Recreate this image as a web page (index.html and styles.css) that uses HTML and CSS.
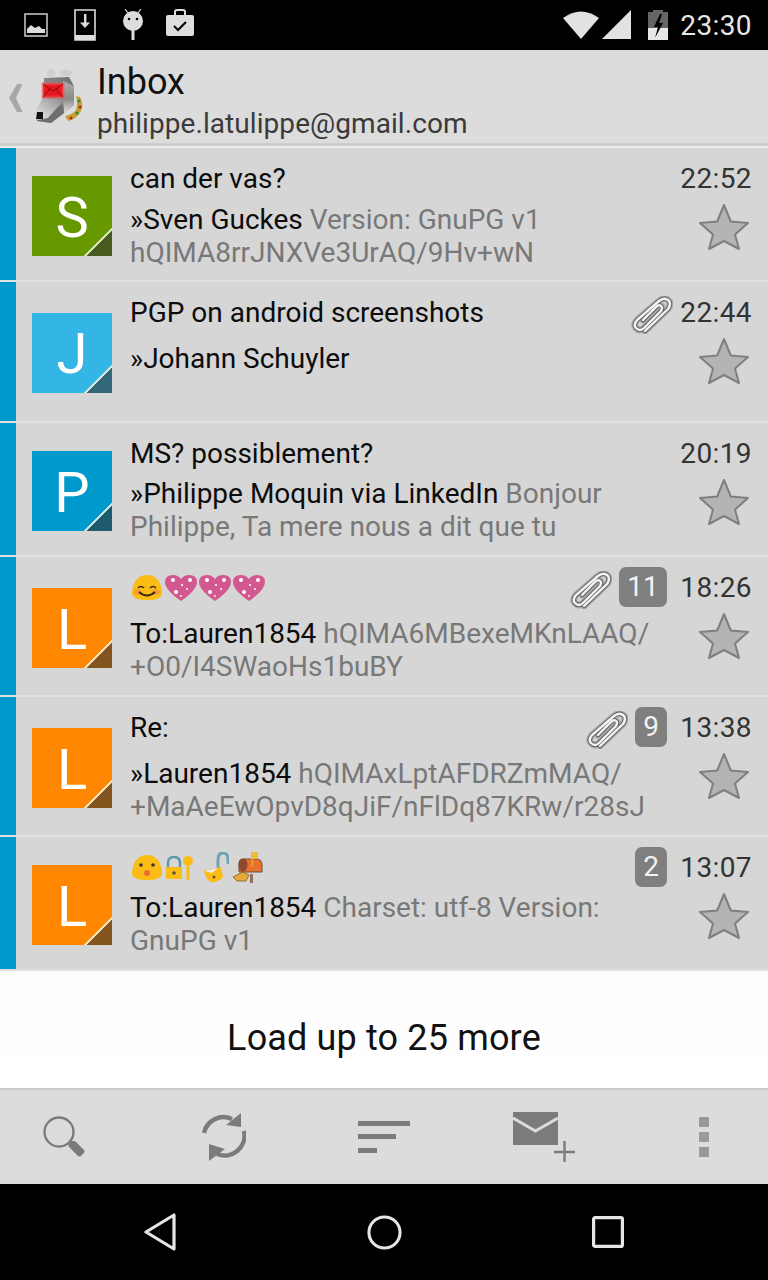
FILE: index.html
```html
<!DOCTYPE html>
<html lang="en">
<head>
<meta charset="utf-8">
<title>Inbox</title>
<link rel="stylesheet" href="styles.css">
</head>
<body>
<div class="screen">
  <div class="status">
    <div class="status-left">
      <svg width="24" height="24" viewBox="0 0 24 24"><rect x="1" y="1" width="22" height="22" fill="none" stroke="#ddd" stroke-width="1.4"/><path d="M3 20v-4l4-4 4 3 4-2 3 3 3 0v4z" fill="#ddd"/></svg>
      <svg width="22" height="32" viewBox="0 0 22 32"><path d="M1 1h20v30H1z" fill="none" stroke="#ddd" stroke-width="1.6"/><rect x="1" y="26" width="20" height="5" fill="#ddd"/><path d="M10 5h2.4v8.5h3.6L11 19l-5-5.500h4z" fill="#ddd"/></svg>
      <svg class="android" width="22" height="32" viewBox="0 0 22 32"><path d="M3 0l3 4M19 0l-3 4" stroke="#ddd" stroke-width="1.2"/><circle cx="11" cy="12" r="10" fill="#ddd"/><circle cx="7" cy="10" r="1.300" fill="#000"/><circle cx="15" cy="10" r="1.300" fill="#000"/><rect x="9.500" y="21" width="3" height="10" fill="#ddd"/></svg>
      <svg class="bag" width="28" height="28" viewBox="0 0 28 28"><path d="M9 6V3q0-2 2-2h6q2 0 2 2v3" fill="none" stroke="#ddd" stroke-width="2"/><rect x="0" y="6" width="28" height="21" rx="2" fill="#ddd"/><path d="M8 17l4 4 8-8" fill="none" stroke="#000" stroke-width="2"/></svg>
    </div>
    <div class="status-right">
      <svg width="36" height="28" viewBox="0 0 36 28"><path d="M0 7Q18-6 36 7L18 28z" fill="#e2e2e2"/></svg>
      <svg width="30" height="30" viewBox="0 0 30 30"><path d="M0 29L29 0v29z" fill="#e2e2e2"/></svg>
      <svg width="20" height="30" viewBox="0 0 20 30"><path d="M5 2V0h10v2h5v16H0V2z" fill="#666"/><rect y="18" width="20" height="12" fill="#e8e8e8"/><path d="M12 4l-6 13h4l-3 11 8-15h-4l3-9z" fill="#000"/></svg>
      <span class="clock">23:30</span>
    </div>
  </div>

  <header class="appbar">
    <svg class="chevron" width="14" height="28" viewBox="0 0 14 28"><path d="M13.500 0H8L0 14l8 14h5.500L7 14z" fill="#a8a8a8"/></svg>
    <svg class="logo" width="52" height="58" viewBox="32 68 52 58">
      <defs>
        <linearGradient id="headFill" x1="1" y1="0" x2="0" y2="1"><stop offset="0" stop-color="#6f6f6f"/><stop offset=".5" stop-color="#8e8e8e"/><stop offset="1" stop-color="#b8b8b8"/></linearGradient>
        <linearGradient id="sideFill" x1="0" y1="0" x2="0" y2="1"><stop offset="0" stop-color="#b0b0b0"/><stop offset=".55" stop-color="#8a8a8a"/><stop offset="1" stop-color="#e0e0e0"/></linearGradient>
        <linearGradient id="muzzleFill" x1="1" y1="0" x2="0" y2="1"><stop offset="0" stop-color="#8c8c8c"/><stop offset="1" stop-color="#f0f0f0"/></linearGradient>
      </defs>
      <ellipse cx="50" cy="74" rx="4.500" ry="4" fill="#cfcfcf"/><ellipse cx="65" cy="74" rx="6.500" ry="3.500" fill="#cfcfcf"/>
      <path d="M75 97l4 1q4 8 1 14-4 8-13 10l-3-5q7-1 11-6 2-6 0-14z" fill="#c8a032"/>
      <circle cx="78" cy="102" r="1.600" fill="#2e8b3a"/><circle cx="79" cy="108" r="1.600" fill="#b3262a"/><circle cx="76" cy="114" r="1.600" fill="#2e8b3a"/><circle cx="70" cy="119" r="1.600" fill="#b3262a"/>
      <path d="M43 79l25-1 5 9v19l-10 8-13 10-14-2-3-7 6-9 3-8z" fill="url(#headFill)"/>
      <path d="M62 82l11 5v19l-10 8-1-14z" fill="url(#sideFill)"/>
      <path d="M42 99l20 1-5 8-10 11-9 3-5-5 2-7z" fill="url(#muzzleFill)"/>
      <path d="M47 119l10-11 5-3 1 9-13 10-14-2 0-1z" fill="#6e6e6e"/>
      <path d="M36 113h6v7h-7z" fill="#111"/>
      <rect x="42" y="85" width="20" height="13" fill="#e8161e" stroke="#f44" stroke-opacity=".55" stroke-width="3"/>
      <path d="M42 85l10 7 10-7M42 98l7-8M62 98l-7-8" fill="none" stroke="#6a0a0a" stroke-width=".8"/>
    </svg>
    <div class="appbar-text">
      <div class="appbar-title">Inbox</div>
      <div class="appbar-sub">philippe.latulippe@gmail.com</div>
    </div>
  </header>

  <main class="list">
    <article class="row h134">
      <div class="stripe"></div>
      <div class="avatar green"><span>S</span><i class="fold"></i></div>
      <div class="body">
        <div class="subject">can der vas?</div>
        <p class="preview"><b>»Sven Guckes</b> Version: GnuPG v1 hQIMA8rrJNXVe3UrAQ/9Hv+wN</p>
      </div>
      <div class="side"><span class="time">22:52</span><svg class="star" width="52" height="48" viewBox="0 0 52 48"><use href="#star"/></svg></div>
    </article>

    <article class="row h141 clipped">
      <div class="stripe"></div>
      <div class="avatar sky"><span>J</span><i class="fold"></i></div>
      <div class="body">
        <div class="subject">PGP on android screenshots
          <span class="meta solo"><svg class="clip" width="42" height="38" viewBox="0 0 42 38"><use href="#clip"/></svg></span></div>
        <p class="preview"><b>»Johann Schuyler</b></p>
      </div>
      <div class="side"><span class="time">22:44</span><svg class="star" width="52" height="48" viewBox="0 0 52 48"><use href="#star"/></svg></div>
    </article>

    <article class="row h134 tight">
      <div class="stripe"></div>
      <div class="avatar blue"><span>P</span><i class="fold"></i></div>
      <div class="body">
        <div class="subject">MS? possiblement?</div>
        <p class="preview"><b>»Philippe Moquin via LinkedIn</b> Bonjour Philippe, Ta mere nous a dit que tu</p>
      </div>
      <div class="side"><span class="time">20:19</span><svg class="star" width="52" height="48" viewBox="0 0 52 48"><use href="#star"/></svg></div>
    </article>

    <article class="row h140 clipped">
      <div class="stripe"></div>
      <div class="avatar orange"><span>L</span><i class="fold"></i></div>
      <div class="body">
        <div class="subject">
          <span class="emoji-run">
            <svg width="34" height="28" viewBox="0 0 34 28"><use href="#blob"/><ellipse cx="8" cy="18" rx="4" ry="2.500" fill="#f59a3c"/><ellipse cx="26" cy="18" rx="4" ry="2.500" fill="#f59a3c"/><path d="M8 14q3-3 6 0M20 14q3-3 6 0" fill="none" stroke="#3a2a10" stroke-width="1.600"/><path d="M9 18q8 7 16 0" fill="none" stroke="#3a2a10" stroke-width="1.800"/></svg>
            <svg width="34" height="28" viewBox="0 0 34 28"><use href="#heart"/></svg>
            <svg width="34" height="28" viewBox="0 0 34 28"><use href="#heart"/></svg>
            <svg width="34" height="28" viewBox="0 0 34 28"><use href="#heart"/></svg>
          </span>
          <span class="meta"><svg class="clip" width="42" height="38" viewBox="0 0 42 38"><use href="#clip"/></svg><span class="count count-wide">11</span></span>
        </div>
        <p class="preview"><b>To:Lauren1854</b> hQIMA6MBexeMKnLAAQ/ +O0/I4SWaoHs1buBY</p>
      </div>
      <div class="side"><span class="time">18:26</span><svg class="star" width="52" height="48" viewBox="0 0 52 48"><use href="#star"/></svg></div>
    </article>

    <article class="row h140 clipped">
      <div class="stripe"></div>
      <div class="avatar orange"><span>L</span><i class="fold"></i></div>
      <div class="body">
        <div class="subject">Re:
          <span class="meta"><svg class="clip" width="42" height="38" viewBox="0 0 42 38"><use href="#clip"/></svg><span class="count">9</span></span>
        </div>
        <p class="preview"><b>»Lauren1854</b> hQIMAxLptAFDRZmMAQ/ +MaAeEwOpvD8qJiF/nFlDq87KRw/r28sJ</p>
      </div>
      <div class="side"><span class="time">13:38</span><svg class="star" width="52" height="48" viewBox="0 0 52 48"><use href="#star"/></svg></div>
    </article>

    <article class="row h134 tight">
      <div class="stripe"></div>
      <div class="avatar orange"><span>L</span><i class="fold"></i></div>
      <div class="body">
        <div class="subject">
          <span class="emoji-run">
            <svg width="34" height="28" viewBox="0 0 34 28"><use href="#blob"/><circle cx="11" cy="11" r="1.800" fill="#333"/><circle cx="23" cy="11" r="1.800" fill="#333"/><circle cx="17" cy="19" r="3" fill="#ef6c2e"/></svg>
            <svg class="em-lock" width="30" height="28" viewBox="0 0 30 28"><path d="M3 13V9q0-6 6-6t6 6v4" fill="none" stroke="#5a98ac" stroke-width="2.400"/><rect x="1" y="13" width="16" height="12" rx="1" fill="#fbbc16"/><circle cx="9" cy="19" r="1.800" fill="#553"/><circle cx="23" cy="7" r="5" fill="#fbbc16"/><rect x="21.500" y="10" width="3" height="16" fill="#fbbc16"/></svg>
            <svg class="em-unlock" width="28" height="32" viewBox="0 0 28 32"><path d="M17 17V8q0-7 5-7t5 6v5" fill="none" stroke="#6ca4b6" stroke-width="3"/><path d="M3 19l17-4 2 10q-5 6-12 5-5-2-7-11z" fill="#fbbc16"/><path d="M4 19l13-3-6 5z" fill="#eee"/><circle cx="13" cy="25" r="1.500" fill="#553"/></svg>
            <svg class="em-mail" width="32" height="32" viewBox="0 0 32 32"><rect x="18" y="22" width="3" height="9" fill="#8d6e63"/><path d="M11 7h13q6 0 6 6v7H7v-9q0-4 4-4z" fill="#e8702a" stroke="#6d4c41" stroke-width="1"/><ellipse cx="11" cy="13" rx="4.500" ry="6.500" fill="#8a4a2c"/><rect x="19.500" y="1" width="1.800" height="14" fill="#e0a030"/><path d="M19 0h7v7h-7z" fill="#f4b83a"/><path d="M1 25l10-5 6 3-3 6H5z" fill="#e8a838" stroke="#7a5a20" stroke-width=".8"/></svg>
          </span>
          <span class="meta"><span class="count">2</span></span>
        </div>
        <p class="preview"><b>To:Lauren1854</b> Charset: utf-8 Version: GnuPG v1</p>
      </div>
      <div class="side"><span class="time">13:07</span><svg class="star" width="52" height="48" viewBox="0 0 52 48"><use href="#star"/></svg></div>
    </article>

    <div class="load-more">Load up to 25 more</div>
  </main>

  <footer class="toolbar">
    <svg width="48" height="48" viewBox="0 0 48 48"><circle cx="19" cy="19" r="14.500" fill="none" stroke="#7b7b7b" stroke-width="2.400"/><path d="M29 29l3-1 3 0 9 9q1 2 0 3l-3 3q-2 1-3 0l-9-9-1-3z" fill="#7b7b7b"/></svg>
    <svg width="44" height="48" viewBox="0 0 44 48"><path d="M2 20A20 20 0 0 1 30 6" fill="none" stroke="#7b7b7b" stroke-width="4.500"/><path d="M39 0v14l-15-2z" fill="#7b7b7b"/><path d="M42 18A20 20 0 0 1 15 41" fill="none" stroke="#7b7b7b" stroke-width="4.500"/><path d="M7 48V31l16 5z" fill="#7b7b7b"/></svg>
    <svg width="52" height="32" viewBox="0 0 52 32"><path d="M0 0h52v5H0zM0 13h38v5H0zM0 27h19v5H0z" fill="#7b7b7b"/></svg>
    <svg width="62" height="50" viewBox="0 0 62 50"><path d="M0 0h45v33H0z" fill="#7b7b7b"/><path d="M0 6l22.500 13L45 6" fill="none" stroke="#dcdcdc" stroke-width="3"/><path d="M41 40h21M51.500 29v21" stroke="#7b7b7b" stroke-width="2.400"/></svg>
    <svg width="10" height="40" viewBox="0 0 10 40"><path d="M0 0h10v10H0zM0 15h10v10H0zM0 30h10v10H0z" fill="#9a9a9a"/></svg>
  </footer>

  <nav class="navbar">
    <svg width="32" height="38" viewBox="0 0 32 38"><path d="M30 2v34L2 19z" fill="none" stroke="#e6e6e6" stroke-width="3.200" stroke-linejoin="round"/></svg>
    <svg width="35" height="35" viewBox="0 0 36 36"><circle cx="18" cy="18" r="16" fill="none" stroke="#e6e6e6" stroke-width="3.200"/></svg>
    <svg width="32" height="32" viewBox="0 0 32 32"><rect x="1.600" y="1.600" width="28.800" height="28.800" rx="1.500" fill="none" stroke="#e6e6e6" stroke-width="3.200"/></svg>
  </nav>
</div>

<svg class="defs" width="0" height="0" aria-hidden="true">
  <defs>
    <path id="star" d="M26 2l6.800 16.500L50 20 37 31.500 41 46 26 38 11 46l4-14.500L2 20l17.200-1.500z" fill="#b4b4b4" stroke="#7f7f7f" stroke-width="2" stroke-linejoin="round"/>
    <g id="clip" fill="none" stroke-linecap="round">
      <path d="M14 35L37 13q4-6 0-9-4-3-9 1L6 24q-4 5-1 8 4 4 8 0l17-17q2-4 0-5-2-2-5 1L12 24" stroke="#8a8a8a" stroke-width="7" opacity=".5"/>
      <path d="M14 35L37 13q4-6 0-9-4-3-9 1L6 24q-4 5-1 8 4 4 8 0l17-17q2-4 0-5-2-2-5 1L12 24" stroke="#6a6a6a" stroke-width="4.600"/>
      <path d="M14 35L37 13q4-6 0-9-4-3-9 1L6 24q-4 5-1 8 4 4 8 0l17-17q2-4 0-5-2-2-5 1L12 24" stroke="#f4f4f4" stroke-width="2.400"/>
    </g>
    <path id="blob" d="M17 1q13 0 15 17 1 8-15 8T2 18Q4 1 17 1z" fill="#fbbc16"/>
    <g id="heart">
      <path d="M17 27Q1 16 1 8q0-7 8-7 5 0 8 4 3-4 8-4 8 0 8 7 0 8-16 19z" fill="#d2588f"/>
      <g fill="#fff"><circle cx="9" cy="6" r="2"/><circle cx="26" cy="6" r="2"/><circle cx="12" cy="18" r="2"/><circle cx="18" cy="11" r="1"/><circle cx="23" cy="15" r="1"/><circle cx="17" cy="22" r=".9"/></g>
    </g>
  </defs>
</svg>
</body>
</html>
```
FILE: styles.css
```css
* { box-sizing: border-box; }
html, body { margin: 0; padding: 0; }
body { width: 768px; height: 1280px; overflow: hidden; font-family: Roboto, "Noto Sans", sans-serif; background: #000; }
.screen { width: 768px; height: 1280px; display: flex; flex-direction: column; }
.defs { position: absolute; }

.status { height: 50px; background: #000; display: flex; justify-content: space-between; align-items: center; padding: 0 16px 0 24px; flex: none; }
.status-left { display: flex; align-items: center; gap: 26px; }
.android { margin-right: -4px; }
.bag { margin-top: -5px; }
.status-right { display: flex; align-items: center; gap: 16px; }
.status-right svg:nth-child(2) { margin-left: -13px; }
.clock { color: #e6e6e6; font-size: 28px; letter-spacing: .4px; margin-left: -4px; }

.appbar { height: 98px; flex: none; background: #dcdcdc; border-bottom: 2px solid #ececec; box-shadow: inset 0 -3px 0 #cfcfcf; display: flex; align-items: center; padding: 0 0 0 8px; }
.chevron { margin-left: 1px; }
.logo { margin-left: 10px; margin-top: -4px; }
.appbar-text { margin-left: 12px; }
.appbar-title { font-size: 36px; line-height: 44px; color: #111; margin-top: 5px; }
.appbar-sub { font-size: 28px; line-height: 34px; color: #3a3a3a; margin-top: 3px; letter-spacing: .07px; }

.list { flex: 1; background: #d6d6d6; display: flex; flex-direction: column; min-height: 0; }
.row { display: flex; align-items: stretch; border-bottom: 2px solid #e0e0e0; background: #d6d6d6; flex: none; }
.h134 { height: 134px; }
.h141 { height: 141px; }
.h140 { height: 140px; }
.stripe { width: 16px; background: #0099cc; flex: none; }
.avatar { width: 80px; height: 80px; flex: none; align-self: center; margin-left: 16px; margin-top: 4px; padding-top: 3px; position: relative; overflow: hidden; color: #fff; font-size: 56px; display: flex; align-items: center; justify-content: center; }
.h141 .avatar { margin-top: 2px; }
.green { background: #669900; }
.sky { background: #33b5e5; }
.blue { background: #0099cc; }
.orange { background: #ff8800; }
.fold { position: absolute; right: 0; bottom: 0; width: 28px; height: 28px; background: linear-gradient(135deg, transparent 49%, rgba(240,240,220,.85) 49%, rgba(240,240,220,.85) 54%, rgba(50,50,50,.6) 54%); }
.body { flex: 1; min-width: 0; margin-left: 18px; padding-top: 15px; }
.subject { position: relative; height: 40px; font-size: 28px; line-height: 32px; color: #0c0c0c; }
.tight .subject { height: 39px; }
.clipped .subject { height: 45px; }
.emoji-run { display: flex; align-items: center; height: 32px; }
.emoji-run svg { flex: none; }
.em-lock { margin-left: 1px; }
.em-unlock { margin-left: 6px; }
.em-mail { margin-left: 3px; }
.meta { position: absolute; right: 1px; top: -5px; display: flex; align-items: center; gap: 7px; height: 40px; }
.solo { right: -5px; }
.clip { flex: none; margin-top: 6px; }
.count { min-width: 32px; height: 40px; border-radius: 7px; background: #7f7f7f; color: #f2f2f2; font-size: 28px; line-height: 40px; text-align: center; }
.count-wide { min-width: 48px; }
.preview { margin: 0; font-size: 28px; line-height: 33px; color: #787878; width: 530px; overflow-wrap: anywhere; }
.preview b { font-weight: 400; color: #0c0c0c; }
.side { width: 100px; flex: none; display: flex; flex-direction: column; align-items: flex-end; padding: 15px 16px 0 0; }
.time { font-size: 28px; line-height: 32px; color: #333; letter-spacing: .4px; }
.star { margin-top: 8px; margin-right: 2px; }

.load-more { height: 120px; flex: none; background: linear-gradient(#fdfdfd, #fff); color: #111; font-size: 36px; letter-spacing: .15px; display: flex; align-items: center; justify-content: center; padding-top: 16px; border-bottom: 3px solid #c8c8c8; }

.toolbar { height: 94px; flex: none; background: #dcdcdc; display: grid; grid-template-columns: repeat(5, 160px); justify-items: center; align-items: center; margin-left: -16px; width: 800px; }
.navbar { height: 96px; flex: none; background: #000; display: flex; align-items: center; justify-content: space-between; padding: 0 144px; }
```
